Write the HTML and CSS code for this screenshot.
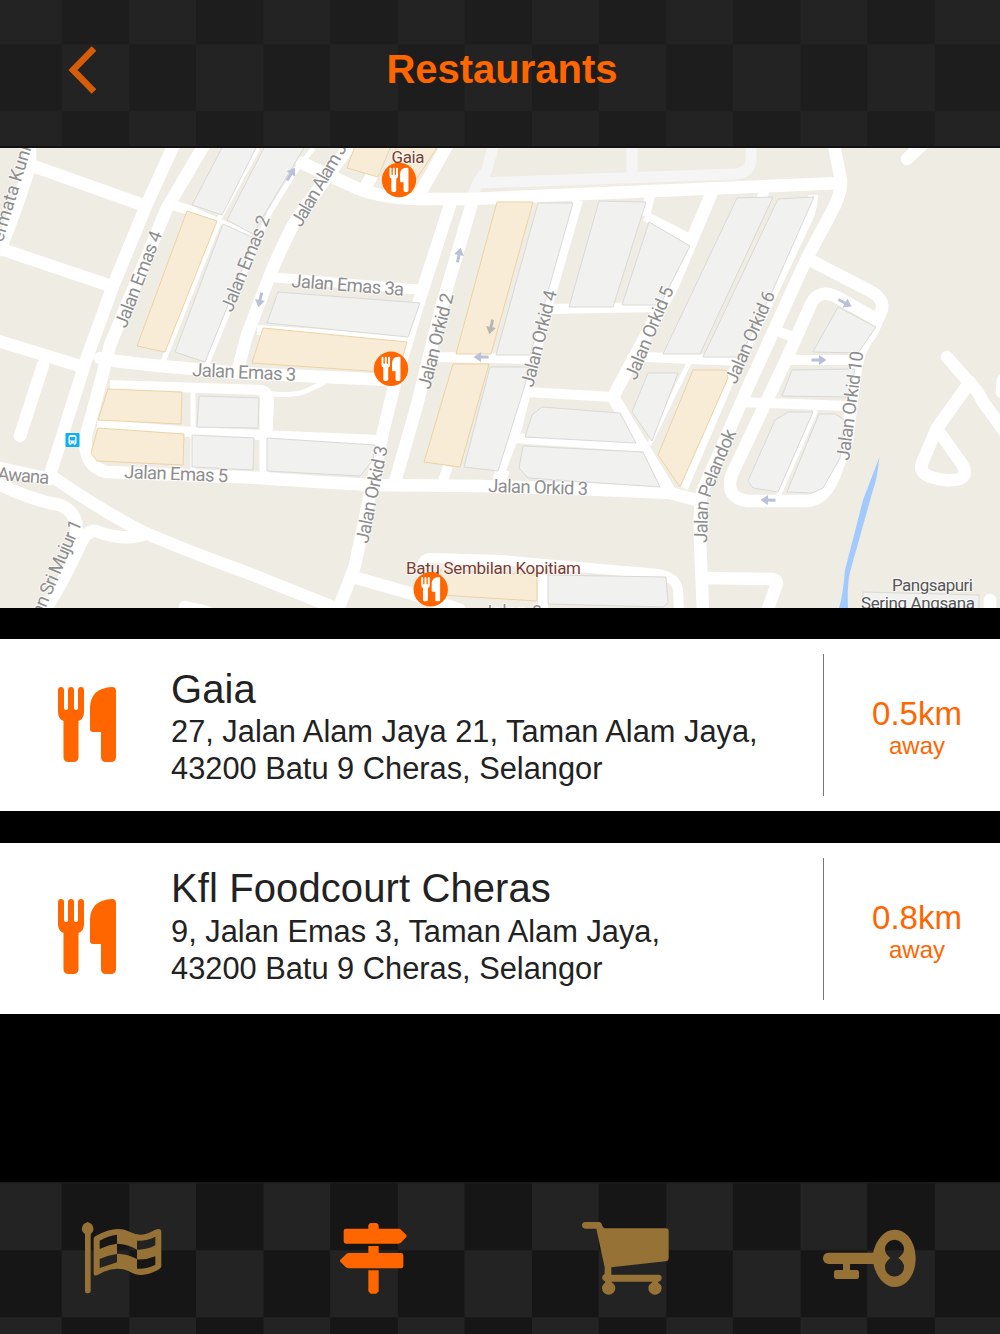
FILE: index.html
```html
<!DOCTYPE html>
<html lang="en">
<head>
  <meta charset="UTF-8">
  <meta name="viewport" content="width=device-width, initial-scale=1.0">
  <title>Restaurants</title>
  <link rel="stylesheet" href="styles.css">
</head>
<body>

  <!-- Shared shapes -->
  <svg class="defs" width="0" height="0">
    <symbol id="cutlery" viewBox="0 0 58 75">
      <path d="M0 3a3 3 0 0 1 6 0V21a2 2 0 0 0 4 0V3a3 3 0 0 1 6 0V21a2 2 0 0 0 4 0V3a3 3 0 0 1 6 0V25Q26 32 20.500 34V70Q20.500 75 15.500 75H10.500Q5.500 75 5.500 70V34Q0 32 0 25Z"/>
      <path d="M54 0Q58 0 58 4V70Q58 75 53 75H48Q43 75 43 70V45H35Q32 45 32 42V20Q33 1 54 0Z"/>
    </symbol>
    <symbol id="arrow" viewBox="-8 -8 16 16">
      <path d="M-7.500 -1.500H0V-5L7.500 0L0 5V1.500H-7.500Z"/>
    </symbol>
  </svg>

  <!-- Header -->
  <header class="header">
    <a href="#" class="back" aria-label="Back">
      <svg width="30" height="54" viewBox="0 0 30 54"><path d="M26 6.500L5 28L26 49.500"/></svg>
    </a>
    <h1>Restaurants</h1>
  </header>

  <!-- Map -->
  <svg class="map" viewBox="0 148 1000 460">
    <g class="lane">
      <path d="M474 192Q478 180 486 172L495 140M478 183L735 174Q750 173 751 160V140M632 140V178"/>
    </g>

    <g class="road">
      <path d="M176 140L146 206L113 286L86 360L50 475Q97 508 143 532Q200 556 240 570L333 607"/>
      <path d="M207 140L167 208L110 345Q103 375 86 435Q82 465 106 472L260 478Q330 483 373 485L480 486L580 489L670 493L700 501"/>
      <path d="M30 140V165Q20 200 0 250M33 166L143 205M-5 247L108 285M-5 340L80 366M43 365L20 436"/>
      <path d="M-5 467L50 479M-5 482Q30 500 60 505Q80 514 76 535"/>
      <path d="M40 618Q62 585 80 545Q86 530 96 531Q125 542 145 534M185 607L207 612"/>
      <path d="M348 148Q310 200 293 225Q278 255 270 275L247 335L237 373"/>
      <path d="M100 358Q110 361 160 366L240 373L390 380"/>
      <path d="M302 163L350 185Q375 198 420 199H470L840 183"/>
      <path d="M450 205L420 298L397 375L383 432L355 565Q350 580 337 612"/>
      <path d="M472 203L440 312L417 405L395 482"/>
      <path d="M353 577L413 594L460 610M448 144L418 197M375 170L365 188"/>
      <path d="M712 192L673 285L623 378L613 397L670 492"/>
      <path d="M833 140L841 180Q842 194 830 215L807 258L748 387L702 492Q699 510 700 540L703 612"/>
      <path d="M810 260L868 290Q888 300 880 314L872 332Q857 350 855 375L847 440L837 468Q827 500 807 501H748Q724 498 732 474L787 358L811 304Q819 288 837 297L876 319"/>
      <path d="M907 159L925 142M947 357L967 380Q978 390 983 402L1005 432M970 382L937 428L922 463Q917 477 945 480Q972 482 962 464L940 433M1003 380L1002 392"/>
      <path d="M707 578L772 579Q779 580 776 586L767 612M990 600V615"/>
    </g>
    <g class="road medium">
      <path d="M270 277L423 290M257 330L408 340M110 385L260 390Q270 391 269 405L265 475M97 424L190 432L380 440"/>
      <path d="M437 357L530 359M645 357L740 361M578 200L547 308L517 428L497 480"/>
      <path d="M645 216L690 239M550 309L657 307M527 392L613 397M513 438L647 447"/>
      <path d="M777 331L793 337M787 360H853M740 402L847 406M813 195Q813 208 807 220L772 295L727 385L683 488"/>
      <path d="M422 568Q422 557 433 558L500 560L647 573Q676 574 678 590L679 612M543 575V612M448 466L442 484M505 470L500 484M650 196L645 216"/>
      <path d="M765 190L761 200M173 205L195 212"/>
    </g>
    <g class="road small">
      <path d="M312 150L296 170L270 212L235 295L207 364M257 150L220 217M190 208L217 220L250 234M219 222L163 362"/>
      <path d="M193 392V470M688 365L650 443M815 412L779 494M262 395V470"/>
      <path d="M272 394Q295 396 306 391L323 383"/>
    </g>

    <g class="block">
      <path d="M223 146H257L222 215L192 205ZM265 146H305L270 205L253 234L227 220ZM223 224L254 238L228 305L205 362L175 352Z"/>
      <path d="M278 292L420 303L408 337L267 323ZM199 396L259 398L258 428L197 427ZM192 435L254 438L253 470L192 467ZM267 438L375 445L373 460L360 476L267 471Z"/>
      <path d="M538 203H573L530 355H496ZM599 201L646 202L613 307H569ZM649 222L690 246L660 305H622ZM737 198L773 197L700 354H663ZM778 199L814 197L772 292L740 357H703Z"/>
      <path d="M490 367H529L525 385L498 471L464 467ZM542 407L620 413L636 443L525 437L532 415ZM523 446L643 452L660 487L528 478L519 468ZM648 373H678L652 441L632 412Z"/>
      <path d="M548 575L666 577L668 603L663 607L548 604ZM838 307L876 327L858 353L813 352ZM792 370L855 369L848 397L782 396Z"/>
      <path d="M788 412H813L778 492L753 488L748 481L775 420ZM819 414H835L845 420L840 458L823 488L812 493L787 492ZM863 592L979 595V615H863Z"/>
    </g>
    <g class="block shop">
      <path d="M355 146L347 168L378 177L391 146ZM396 146L388 180L412 186L438 146ZM187 211L217 221L165 352L137 346ZM263 328L407 342L398 373L252 363Z"/>
      <path d="M108 389L182 392L181 424L98 420ZM98 428L184 434L183 465L97 461L91 453ZM497 202H533L491 354H456ZM453 364H489L460 467L424 462Z"/>
      <path d="M693 370H726L728 378L680 487L658 455ZM440 570L537 575V601L440 595Z"/>
    </g>

    <path class="river" d="M879.500 457Q877 480 873 490L850 572Q847 585 848 608H839Q843 595 845 570L863 500Z"/>

    <g class="arrows">
      <use href="#arrow" x="-8" y="-8" width="16" height="16" transform="translate(291 174) rotate(-58)"/>
      <use href="#arrow" x="-8" y="-8" width="16" height="16" transform="translate(260 300) rotate(103)"/>
      <use href="#arrow" x="-8" y="-8" width="16" height="16" transform="translate(459 255) rotate(-78)"/>
      <use href="#arrow" x="-8" y="-8" width="16" height="16" transform="translate(491 327) rotate(103)" class="dim"/>
      <use href="#arrow" x="-8" y="-8" width="16" height="16" transform="translate(481 357) rotate(180)"/>
      <use href="#arrow" x="-8" y="-8" width="16" height="16" transform="translate(845 303) rotate(28)"/>
      <use href="#arrow" x="-8" y="-8" width="16" height="16" transform="translate(819 360)"/>
      <use href="#arrow" x="-8" y="-8" width="16" height="16" transform="translate(768 500) rotate(181)"/>
    </g>

    <!-- Street names -->
    <g class="street">
      <text transform="translate(-1 254) rotate(-73)">Permata Kuning</text>
      <text transform="translate(126 329) rotate(-69)" textLength="102">Jalan Emas 4</text>
      <text transform="translate(232 313) rotate(-68)" textLength="102">Jalan Emas 2</text>
      <text transform="translate(301 228) rotate(-60)" textLength="118">Jalan Alam Jaya</text>
      <text transform="translate(291 287) rotate(4.500)" textLength="113">Jalan Emas 3a</text>
      <text transform="translate(192 376) rotate(2.700)" textLength="104">Jalan Emas 3</text>
      <text transform="translate(124 478) rotate(2.300)" textLength="104">Jalan Emas 5</text>
      <text transform="translate(-3 480) rotate(4.500)" textLength="52">Awana</text>
      <text transform="translate(82 523) rotate(-67)" text-anchor="end" textLength="124">Jalan Sri Mujur 1</text>
      <text transform="translate(430 390) rotate(-76)" textLength="98">Jalan Orkid 2</text>
      <text transform="translate(368 544) rotate(-78.500)" textLength="99">Jalan Orkid 3</text>
      <text transform="translate(533 388) rotate(-76)" textLength="99">Jalan Orkid 4</text>
      <text transform="translate(636 381) rotate(-67.500)" textLength="99">Jalan Orkid 5</text>
      <text transform="translate(736 385) rotate(-66.500)" textLength="99">Jalan Orkid 6</text>
      <text transform="translate(849 461) rotate(-82.500)" textLength="110">Jalan Orkid 10</text>
      <text transform="translate(488 492) rotate(1.700)" textLength="100">Jalan Orkid 3</text>
      <path id="pelandok" class="guide" d="M707 543L708 508Q709 494 737 432L746 412"/>
      <text><textPath href="#pelandok" textLength="116">Jalan Pelandok</textPath></text>
      <text x="482" y="618">Jalan 8</text>
    </g>
    <g class="place">
      <text x="391.500" y="163" textLength="33">Gaia</text>
      <text x="406" y="574" textLength="175">Batu Sembilan Kopitiam</text>
      <text x="892" y="591" textLength="81" class="estate">Pangsapuri</text>
      <text x="861" y="609" textLength="114" class="estate">Sering Angsana</text>
    </g>

    <g class="bus">
      <rect x="65.500" y="433" width="14" height="14" rx="1"/>
      <path d="M68.500 437Q68.500 435 70.500 435H74.500Q76.500 435 76.500 437V443.500H75.500V445H73.800V443.500H71.200V445H69.500V443.500H68.500ZM69.800 437V440.500H75.200V437ZM69.800 441.600V442.600H71V441.600ZM74 441.600V442.600H75.200V441.600Z"/>
    </g>

    <g class="pin">
      <circle cx="399" cy="180" r="17.200"/>
      <use href="#cutlery" x="389" y="167.500" width="20" height="24.500"/>
      <circle cx="391" cy="368.800" r="17.200"/>
      <use href="#cutlery" x="381" y="356.500" width="20" height="24.500"/>
      <circle cx="430.700" cy="589.300" r="17.200"/>
      <use href="#cutlery" x="420.700" y="577" width="20" height="24.500"/>
    </g>
  </svg>

  <!-- Restaurant list -->
  <main class="list">
    <article class="item">
      <svg class="item-icon" viewBox="0 0 58 75"><use href="#cutlery"/></svg>
      <div class="details">
        <h2>Gaia</h2>
        <p>27, Jalan Alam Jaya 21, Taman Alam Jaya,<br>43200 Batu 9 Cheras, Selangor</p>
      </div>
      <div class="distance"><strong>0.5km</strong><span>away</span></div>
    </article>
    <article class="item second">
      <svg class="item-icon" viewBox="0 0 58 75"><use href="#cutlery"/></svg>
      <div class="details">
        <h2>Kfl Foodcourt Cheras</h2>
        <p>9, Jalan Emas 3, Taman Alam Jaya,<br>43200 Batu 9 Cheras, Selangor</p>
      </div>
      <div class="distance"><strong>0.8km</strong><span>away</span></div>
    </article>
  </main>

  <!-- Tab bar -->
  <nav class="tabs">
    <a href="#" aria-label="Races">
      <svg viewBox="0 6 750 456">
        <path d="M263 126L275 132Q284 146 278 155L272 163V334Q272 340 264 340Q255 340 255 334V163L248 155Q242 146 251 132Z"/>
        <path fill-rule="evenodd" d="M281 176Q281 171 287 168Q350 132 392 157Q425 174 464 150Q484 141 484 156V258Q484 264 478 267Q425 299 386 273Q345 255 297 283Q281 292 281 278ZM299 182Q325 167 351 164V191Q325 194 299 207ZM411 182Q440 184 466 170V196Q440 210 411 209ZM351 191Q385 192 411 209V237Q385 222 351 221ZM299 237Q325 225 351 222V247L299 264ZM411 238Q440 240 466 229V254Q440 268 411 266Z"/>
      </svg>
    </a>
    <a href="#" class="active" aria-label="Directions">
      <svg viewBox="750 6 750 456">
        <path d="M1105 146V136Q1107 129 1113 129H1128Q1136 130 1136 137V146H1198Q1202 147 1206 152L1219 165Q1221 168 1219 171L1204 187Q1200 191 1195 191H1038Q1031 191 1031 184V153Q1031 146 1038 146ZM1105 198H1136V219H1203Q1210 219 1210 226V258Q1210 265 1203 265H1045Q1040 264 1036 260L1021 245Q1019 242 1021 239L1036 225Q1040 219 1046 219H1105ZM1105 271H1136V334L1129 341H1112L1105 334Z"/>
      </svg>
    </a>
    <a href="#" aria-label="Shop">
      <svg viewBox="0 6 750 456">
        <path d="M256 126H298Q304 126 306 134Q308 144 314 145H497Q506 145 506 154V234Q506 243 497 244L334 262V284H476Q485 285 485 294Q485 303 475 305L474 308Q485 314 485 324A20 20 0 0 1 445 324Q445 314 456 308L455 305H335L336 308Q346 314 346 324A20 20 0 0 1 306 324Q306 314 316 308L314 303Q306 300 306 292Q307 286 314 281V262L289 146H256Q246 145 246 136Q246 127 256 126Z"/>
      </svg>
    </a>
    <a href="#" aria-label="Account">
      <svg viewBox="750 6 750 456">
        <path fill-rule="evenodd" d="M985 218H1119C1130 175 1155 149 1183 149C1222 149 1247 188 1247 235C1247 282 1222 321 1183 321C1155 321 1130 293 1120 252H1050V270H1070Q1077 270 1077 277V290Q1077 297 1070 297H1009Q1002 297 1002 290V277Q1002 270 1009 270H1029V252H985Q969 250 969 235Q969 220 985 218ZM1171 234Q1155 222 1155 208A28.500 28.500 0 0 1 1212 208Q1212 222 1195 234Q1212 246 1212 261A28.500 28.500 0 0 1 1155 261Q1155 246 1171 234Z"/>
      </svg>
    </a>
  </nav>

</body>
</html>
```
FILE: styles.css
```css
* {
  box-sizing: border-box;
  margin: 0;
  padding: 0;
}

body {
  display: flex;
  flex-direction: column;
  width: 1000px;
  height: 1334px;
  overflow: hidden;
  background: #000;
  color: #222;
  font-family: "Liberation Sans", Arial, sans-serif;
}

.defs {
  display: block;
  flex: none;
}

/* Header */

.header {
  display: grid;
  grid-template-columns: 200px 1fr 200px;
  align-items: center;
  flex: none;
  height: 148px;
  padding-bottom: 8px;
  border-bottom: 2px solid #111;
  background: conic-gradient(#1d1d1d 25%, #232323 0 50%, #1d1d1d 0 75%, #232323 0) 61.700px 44.300px / 134.250px 134px;
}

.back {
  padding-left: 68px;
}

.back svg {
  display: block;
  fill: none;
  stroke: #d65c08;
  stroke-width: 6.500;
}

.header h1 {
  color: #ff6600;
  font-size: 40px;
  line-height: 46px;
  text-align: center;
  padding-left: 4px;
}

/* Map */

.map {
  display: block;
  flex: none;
  width: 1000px;
  height: 460px;
  background: #efece4;
}

.road,
.lane {
  fill: none;
  stroke: #fff;
  stroke-width: 12.500;
  stroke-linecap: round;
  stroke-linejoin: round;
}

.lane {
  stroke: #f5f5f5;
  stroke-width: 11;
}

.medium {
  stroke-width: 10;
  stroke-linecap: butt;
}

.small {
  stroke-width: 5;
}

.block {
  fill: #f1f1f0;
  stroke: #d9d9d8;
}

.shop {
  fill: #f9ecd6;
  stroke: #ecd3a4;
}

.river {
  fill: #a2caff;
}

.arrows {
  fill: #b9c0d8;
}

.arrows .dim {
  fill: #b9b6b4;
}

.street,
.place {
  font-family: Roboto, sans-serif;
  font-size: 18.500px;
  fill: #8e8e8e;
  stroke: rgba(255, 255, 255, 0.7);
  stroke-width: 2;
  stroke-linejoin: round;
  paint-order: stroke;
}

.guide {
  fill: none;
  stroke: none;
}

.place {
  font-size: 17px;
  fill: #7b3c31;
}

.place .estate {
  fill: #555;
}

.bus rect {
  fill: #0caef5;
}

.bus path {
  fill: #fff;
  fill-rule: evenodd;
}

.pin circle {
  fill: #ff6600;
}

.pin use {
  fill: #fff;
}

/* Restaurant list */

.list {
  display: flex;
  flex-direction: column;
  gap: 32px;
  flex: 1;
  padding-top: 31px;
}

.item {
  display: flex;
  align-items: flex-start;
  height: 172px;
  background: #fff;
}

.item-icon {
  width: 58px;
  height: 75px;
  margin: 48px 55px 0 58px;
  fill: #ff6600;
}

.details {
  flex: 1;
  padding-top: 27px;
}

.details h2 {
  font-size: 40px;
  font-weight: normal;
  line-height: 46px;
  letter-spacing: 0.100px;
}

.details p {
  padding-top: 1px;
  font-size: 30.800px;
  line-height: 37px;
}

.distance {
  display: flex;
  flex-direction: column;
  align-items: center;
  width: 177px;
  height: 142px;
  margin-top: 15px;
  padding: 41px 0 0 10px;
  border-left: 1px solid #777;
  color: #ff6600;
}

.distance strong {
  font-size: 33px;
  font-weight: normal;
  line-height: 37px;
}

.distance span {
  font-size: 24px;
  line-height: 28px;
}

.second {
  height: 171px;
}

.second .item-icon {
  margin-top: 56px;
}

.second .details {
  padding-top: 22px;
}

.second p {
  padding-top: 2px;
}

/* Tab bar */

.tabs {
  display: grid;
  grid-template-columns: repeat(4, 1fr);
  flex: none;
  height: 152px;
  border-top: 1px solid #1a1a1a;
  background: conic-gradient(#161616 25%, #232323 0 50%, #161616 0 75%, #232323 0) 61.700px 67.300px / 134.250px 134px;
}

.tabs svg {
  display: block;
  width: 250px;
  height: 152px;
  margin-top: -1px;
  fill: #967236;
}

.tabs .active svg {
  fill: #ff6600;
}
```
